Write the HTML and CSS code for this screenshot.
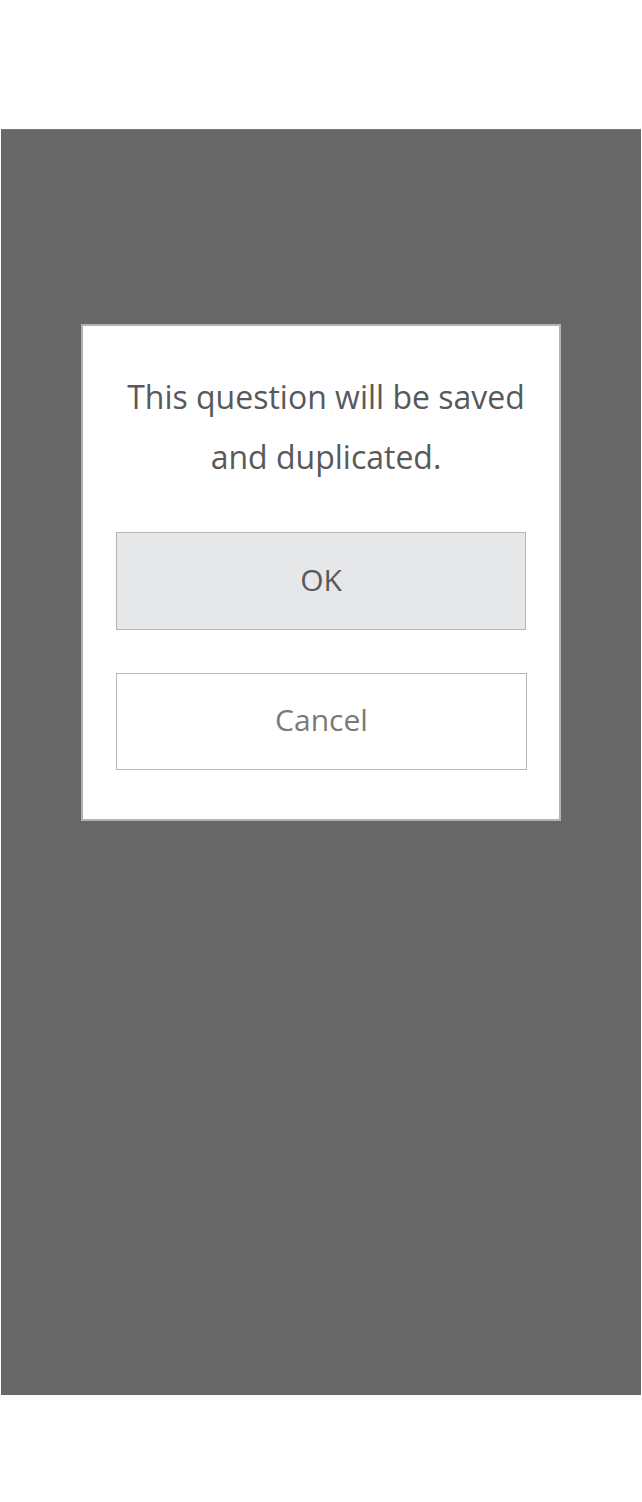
FILE: index.html
```html
<!DOCTYPE html>
<html>
<head>
<meta charset="utf-8">
<link rel="stylesheet" href="styles.css">
</head>
<body>
<div class="overlay">
  <div class="dialog">
    <p class="message">This question will be saved and duplicated.</p>
    <button class="btn btn-ok">OK</button>
    <button class="btn btn-cancel">Cancel</button>
  </div>
</div>
</body>
</html>
```
FILE: styles.css
```css
html, body {
  margin: 0;
  padding: 0;
  background: #ffffff;
}
body {
  font-family: "Open Sans", "Liberation Sans", sans-serif;
  padding-top: 129px;
  padding-left: 1px;
  width: 641px;
  height: 1502px;
  box-sizing: border-box;
}
.overlay {
  width: 640px;
  height: 1266px;
  background: #676767;
  border-top: 1px solid #7a7a7a;
  box-sizing: border-box;
  padding-top: 194px;
  display: flex;
  flex-direction: column;
  align-items: center;
}
.dialog {
  width: 480px;
  height: 497px;
  box-sizing: border-box;
  background: #ffffff;
  border: 2px solid #b3b3b3;
  padding: 41px 33px 0 33px;
  display: flex;
  flex-direction: column;
}
.message {
  margin: 0 0 45px 0;
  padding-left: 10px;
  font-size: 32px;
  line-height: 60px;
  color: #58595b;
  text-align: center;
}
.btn {
  font-family: "Open Sans", "Liberation Sans", sans-serif;
  width: 410px;
  font-size: 30px;
  border: 1.5px solid #b5b5b5;
  box-sizing: border-box;
  padding: 0 0 4px 0;
  display: flex;
  align-items: center;
  justify-content: center;
}
.btn-ok {
  height: 98px;
  background: #e6e7e9;
  color: #58595b;
  margin-bottom: 43px;
}
.btn-cancel {
  height: 97px;
  background: #ffffff;
  color: #7a7a7a;
  width: 411px;
}
```
